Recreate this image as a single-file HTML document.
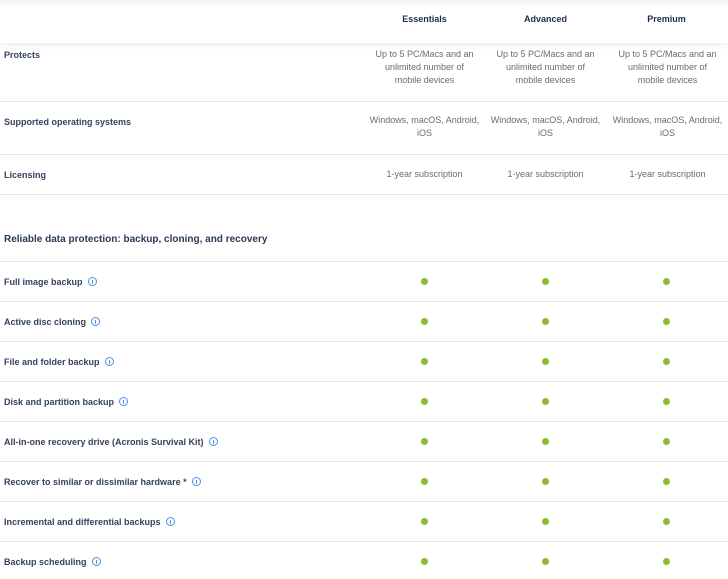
<!DOCTYPE html>
<html><head><style>
body{margin:0;width:728px;height:579px;overflow:hidden;background:#fff;font-family:"Liberation Sans",sans-serif;position:relative}
.hdr{position:absolute;left:0;top:0;width:728px;height:43px;background:#fff;box-shadow:0 2px 6px rgba(0,0,0,0.08), inset 0 6px 6px -4px rgba(0,0,0,0.08)}
.h{position:absolute;top:14px;width:121px;text-align:center;font-size:9px;font-weight:bold;color:#1f2d4d}
.lbl{position:absolute;left:4px;font-size:9px;font-weight:bold;color:#34425e;white-space:nowrap}
.v{position:absolute;width:121px;text-align:center;font-size:9px;line-height:13px;color:#6b6b6b}
.line{position:absolute;left:0;width:728px;height:1px;background:#dde6f2}
.dot{position:absolute;width:7px;height:7px;border-radius:50%;background:#8cbb31}
.i{display:inline-block;width:7px;height:7px;border:1px solid #4a8ee0;border-radius:50%;margin-left:5px;vertical-align:-1px;position:relative}
.i:after{content:"";position:absolute;left:3px;top:2px;width:1px;height:4px;background:#4a8ee0}
.sec{position:absolute;left:4px;top:234px;font-size:10px;font-weight:bold;color:#2b3a55}
</style></head><body>
<div class="hdr"></div>
<div class="h" style="left:364px">Essentials</div>
<div class="h" style="left:485px">Advanced</div>
<div class="h" style="left:606px">Premium</div>

<div class="lbl" style="top:50px">Protects</div>
<div class="v" style="left:364px;top:48px">Up to 5 PC/Macs and an<br>unlimited number of<br>mobile devices</div>
<div class="v" style="left:485px;top:48px">Up to 5 PC/Macs and an<br>unlimited number of<br>mobile devices</div>
<div class="v" style="left:607px;top:48px">Up to 5 PC/Macs and an<br>unlimited number of<br>mobile devices</div>
<div class="line" style="top:101px"></div>

<div class="lbl" style="top:117px">Supported operating systems</div>
<div class="v" style="left:364px;top:114px">Windows, macOS, Android,<br>iOS</div>
<div class="v" style="left:485px;top:114px">Windows, macOS, Android,<br>iOS</div>
<div class="v" style="left:607px;top:114px">Windows, macOS, Android,<br>iOS</div>
<div class="line" style="top:154px"></div>

<div class="lbl" style="top:170px">Licensing</div>
<div class="v" style="left:364px;top:168px">1-year subscription</div>
<div class="v" style="left:485px;top:168px">1-year subscription</div>
<div class="v" style="left:607px;top:168px">1-year subscription</div>
<div class="line" style="top:194px"></div>

<div class="sec">Reliable data protection: backup, cloning, and recovery</div>
<div class="line" style="top:261px"></div>

<div class="lbl" style="top:277px">Full image backup<span class="i"></span></div>
<div class="line" style="top:301px"></div>
<div class="lbl" style="top:317px">Active disc cloning<span class="i"></span></div>
<div class="line" style="top:341px"></div>
<div class="lbl" style="top:357px">File and folder backup<span class="i"></span></div>
<div class="line" style="top:381px"></div>
<div class="lbl" style="top:397px">Disk and partition backup<span class="i"></span></div>
<div class="line" style="top:421px"></div>
<div class="lbl" style="top:437px">All-in-one recovery drive (Acronis Survival Kit)<span class="i"></span></div>
<div class="line" style="top:461px"></div>
<div class="lbl" style="top:477px">Recover to similar or dissimilar hardware *<span class="i"></span></div>
<div class="line" style="top:501px"></div>
<div class="lbl" style="top:517px">Incremental and differential backups<span class="i"></span></div>
<div class="line" style="top:541px"></div>
<div class="lbl" style="top:557px">Backup scheduling<span class="i"></span></div>

<div class="dot" style="left:421px;top:278px"></div><div class="dot" style="left:542px;top:278px"></div><div class="dot" style="left:663px;top:278px"></div>
<div class="dot" style="left:421px;top:318px"></div><div class="dot" style="left:542px;top:318px"></div><div class="dot" style="left:663px;top:318px"></div>
<div class="dot" style="left:421px;top:358px"></div><div class="dot" style="left:542px;top:358px"></div><div class="dot" style="left:663px;top:358px"></div>
<div class="dot" style="left:421px;top:398px"></div><div class="dot" style="left:542px;top:398px"></div><div class="dot" style="left:663px;top:398px"></div>
<div class="dot" style="left:421px;top:438px"></div><div class="dot" style="left:542px;top:438px"></div><div class="dot" style="left:663px;top:438px"></div>
<div class="dot" style="left:421px;top:478px"></div><div class="dot" style="left:542px;top:478px"></div><div class="dot" style="left:663px;top:478px"></div>
<div class="dot" style="left:421px;top:518px"></div><div class="dot" style="left:542px;top:518px"></div><div class="dot" style="left:663px;top:518px"></div>
<div class="dot" style="left:421px;top:558px"></div><div class="dot" style="left:542px;top:558px"></div><div class="dot" style="left:663px;top:558px"></div>
</body></html>
